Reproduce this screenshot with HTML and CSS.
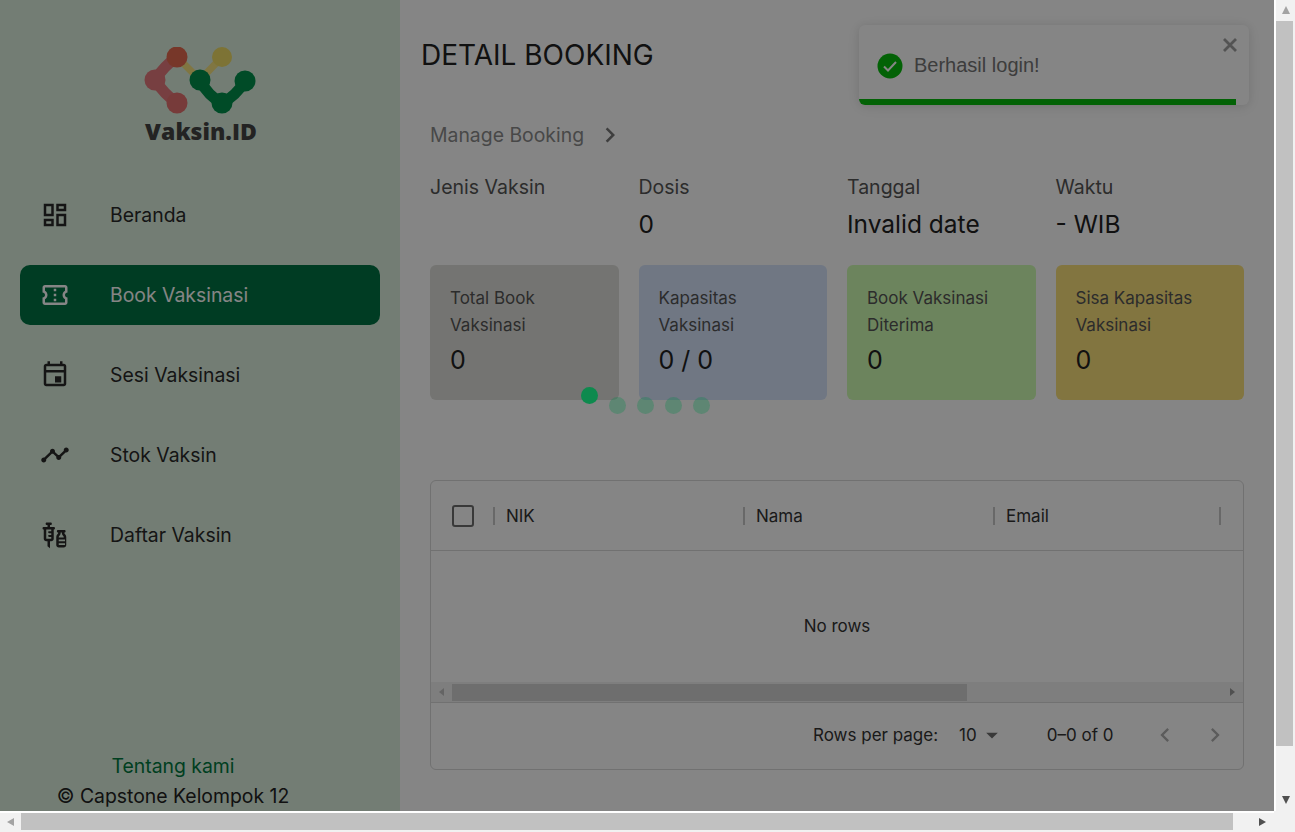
FILE: index.html
```html
<!DOCTYPE html>
<html lang="en">
<head>
  <meta charset="UTF-8">
  <title>Detail Booking</title>
  <link rel="stylesheet" href="styles.css">
</head>
<body>
  <div class="window">
    <div class="viewport">
      <div class="app">
        <aside class="sidebar">
          <div class="logo">
            <svg class="logo-mark" width="112" height="70" viewBox="145 47 112 70">
              <path class="link-yellow" d="M178 57 L201 80 L223 57"/>
              <circle class="c-yellow" cx="223" cy="57" r="10"/>
              <path class="link-red" d="M178 57 Q165 66 156 80 Q165 94 178 103"/>
              <circle class="c-red-left" cx="156" cy="80" r="10.5"/>
              <circle class="c-red-top" cx="178" cy="57" r="10.5"/>
              <circle class="c-red-bottom" cx="178" cy="103" r="10.5"/>
              <path class="link-green" d="M201 80 Q209 96 223 103 Q237 96 246 81"/>
              <circle class="c-green" cx="201" cy="80" r="10.5"/>
              <circle class="c-green" cx="223" cy="103" r="10.5"/>
              <circle class="c-green" cx="246" cy="81" r="10.5"/>
            </svg>
            <span class="logo-text">Vaksin.ID</span>
          </div>

          <nav class="nav">
            <a class="nav-item">
              <svg class="icon" viewBox="0 0 24 24"><path d="M19 5v2h-4V5h4M9 5v6H5V5h4m10 8v6h-4v-6h4M9 17v2H5v-2h4M21 3h-8v6h8V3zM11 3H3v10h8V3zm10 8h-8v10h8V11zm-10 4H3v6h8v-6z"/></svg>
              <span>Beranda</span>
            </a>
            <a class="nav-item active">
              <svg class="icon" viewBox="0 0 24 24"><path d="M22 10V6c0-1.11-.9-2-2-2H4c-1.1 0-1.99.89-1.99 2v4c1.1 0 1.99.9 1.99 2s-.89 2-2 2v4c0 1.1.9 2 2 2h16c1.1 0 2-.9 2-2v-4c-1.1 0-2-.9-2-2s.9-2 2-2zm-2-1.46c-1.19.69-2 1.99-2 3.46s.81 2.77 2 3.46V18H4v-2.54c1.19-.69 2-1.99 2-3.46 0-1.48-.8-2.77-1.99-3.46L4 6h16v2.54zM11 15h2v2h-2zm0-4h2v2h-2zm0-4h2v2h-2z"/></svg>
              <span>Book Vaksinasi</span>
            </a>
            <a class="nav-item">
              <svg class="icon" viewBox="0 0 24 24"><path d="M19 3h-1V1h-2v2H8V1H6v2H5c-1.1 0-2 .9-2 2v14c0 1.1.9 2 2 2h14c1.1 0 2-.9 2-2V5c0-1.1-.9-2-2-2zm0 16H5V10h14v9zM5 8V5h14v3H5zm12 5h-5v5h5v-5z"/></svg>
              <span>Sesi Vaksinasi</span>
            </a>
            <a class="nav-item">
              <svg class="icon" viewBox="0 0 24 24"><path d="M23 8c0 1.1-.9 2-2 2-.18 0-.35-.02-.51-.07l-3.56 3.55c.05.16.07.34.07.52 0 1.1-.9 2-2 2s-2-.9-2-2c0-.18.02-.36.07-.52l-2.55-2.55c-.16.05-.34.07-.52.07s-.36-.02-.52-.07l-4.55 4.56c.05.16.07.33.07.51 0 1.1-.9 2-2 2s-2-.9-2-2 .9-2 2-2c.18 0 .35.02.51.07l4.56-4.55C8.02 9.36 8 9.18 8 9c0-1.1.9-2 2-2s2 .9 2 2c0 .18-.02.36-.07.52l2.55 2.55c.16-.05.34-.07.52-.07s.36.02.52.07l3.55-3.56C19.02 8.35 19 8.18 19 8c0-1.1.9-2 2-2s2 .9 2 2z"/></svg>
              <span>Stok Vaksin</span>
            </a>
            <a class="nav-item">
              <svg class="icon" viewBox="0 0 24 24"><path d="M11 5.5H8V4h.5c.55 0 1-.45 1-1s-.45-1-1-1h-3c-.55 0-1 .45-1 1s.45 1 1 1H6v1.5H3c-.55 0-1 .45-1 1s.45 1 1 1V15c0 1.1.9 2 2 2h1v4l2 1.5V17h1c1.1 0 2-.9 2-2V7.5c.55 0 1-.45 1-1s-.45-1-1-1zM9 9H7.25c-.41 0-.75.34-.75.75s.34.75.75.75H9v1.5H7.25c-.41 0-.75.34-.75.75s.34.75.75.75H9V15H5V7.5h4V9zm10.5 1.5V10c.55 0 1-.45 1-1s-.45-1-1-1h-5c-.55 0-1 .45-1 1s.45 1 1 1v.5c0 .5-1.5 1.16-1.5 3V20c0 1.1.9 2 2 2h4c1.1 0 2-.9 2-2v-6.5c0-1.84-1.5-2.5-1.5-3zm-3 0V10h1v.5c0 1.6 1.5 2 1.5 3V14h-4v-.5c0-1 1.5-1.4 1.5-3zM15 20v-1.5h5V20h-5zm5-3h-5v-1.5h5V17z"/></svg>
              <span>Daftar Vaksin</span>
            </a>
          </nav>

          <footer class="side-footer">
            <a class="about">Tentang kami</a>
            <p class="copy">© Capstone Kelompok 12</p>
          </footer>
        </aside>

        <main class="main">
          <h1 class="title">DETAIL BOOKING</h1>
          <div class="content">
            <div class="crumb">
              <span>Manage Booking</span>
              <svg class="crumb-icon" viewBox="0 0 24 24"><path d="M10 6 8.59 7.41 13.17 12l-4.58 4.59L10 18l6-6z"/></svg>
            </div>

            <div class="grid info">
              <div><div class="info-label">Jenis Vaksin</div><div class="info-value"></div></div>
              <div><div class="info-label">Dosis</div><div class="info-value">0</div></div>
              <div><div class="info-label">Tanggal</div><div class="info-value">Invalid date</div></div>
              <div><div class="info-label">Waktu</div><div class="info-value">- WIB</div></div>
            </div>

            <div class="grid cards">
              <div class="card grey"><div class="card-label">Total Book Vaksinasi</div><div class="card-value">0</div></div>
              <div class="card blue"><div class="card-label">Kapasitas Vaksinasi</div><div class="card-value">0 / 0</div></div>
              <div class="card green"><div class="card-label">Book Vaksinasi Diterima</div><div class="card-value">0</div></div>
              <div class="card yellow"><div class="card-label">Sisa Kapasitas Vaksinasi</div><div class="card-value">0</div></div>
            </div>

            <div class="table">
              <div class="table-head">
                <div class="col-check"><span class="checkbox"></span></div>
                <div class="col">NIK</div>
                <div class="col">Nama</div>
                <div class="col">Email</div>
                <div class="col col-end"></div>
              </div>
              <div class="table-empty">No rows</div>
              <div class="table-scroll">
                <span class="tri tri-left tri-small"></span>
                <div class="table-track"><div class="table-thumb"></div></div>
                <span class="tri tri-right tri-small"></span>
              </div>
              <div class="table-foot">
                <span class="rows-label">Rows per page:</span>
                <span class="rows-value">10</span>
                <svg class="caret" viewBox="0 0 24 24"><path d="m7 10 5 5 5-5z"/></svg>
                <span class="rows-range">0–0 of 0</span>
                <svg class="page-btn" viewBox="0 0 24 24"><path d="M15.41 7.41 14 6l-6 6 6 6 1.41-1.41L10.83 12z"/></svg>
                <svg class="page-btn" viewBox="0 0 24 24"><path d="M10 6 8.59 7.41 13.17 12l-4.58 4.59L10 18l6-6z"/></svg>
              </div>
            </div>
          </div>
        </main>
      </div>

      <div class="toast">
        <svg class="toast-icon" viewBox="0 0 26 26"><circle cx="13" cy="13" r="12.5"/><path d="M7 13.5 11 17.5 19 9"/></svg>
        <span class="toast-text">Berhasil login!</span>
        <svg class="toast-close" viewBox="0 0 14 14"><path d="M1 1 13 13 M13 1 1 13"/></svg>
        <div class="toast-bar"></div>
      </div>

      <div class="overlay"></div>

      <div class="loader">
        <span class="dot on"></span>
        <span class="dot"></span>
        <span class="dot"></span>
        <span class="dot"></span>
        <span class="dot"></span>
      </div>
    </div>

    <div class="vbar">
      <span class="tri tri-up"></span>
      <div class="vthumb"></div>
      <span class="tri tri-down"></span>
    </div>
    <div class="hbar">
      <span class="tri tri-left"></span>
      <div class="hthumb"></div>
      <span class="tri tri-right"></span>
    </div>
    <div class="corner"></div>
  </div>
</body>
</html>
```

FILE: styles.css
```css
html, body {
  margin: 0;
  height: 100%;
  overflow: hidden;
  font-family: Inter, "Open Sans", sans-serif;
  color: #222;
}

.window {
  display: grid;
  grid-template-columns: 1274px 21px;
  grid-template-rows: 811px 21px;
  height: 832px;
}

.viewport {
  position: relative;
  overflow: hidden;
}

.app {
  display: flex;
  width: 1295px;
  height: 860px;
  background: #fff;
}

/* sidebar */
.sidebar {
  display: flex;
  flex-direction: column;
  flex: none;
  width: 400px;
  height: 811px;
  box-sizing: border-box;
  padding: 47px 20px 0;
  background: #dcf0de;
}

.logo {
  display: flex;
  flex-direction: column;
  align-items: center;
  height: 138px;
}

.logo-mark {
  display: block;
  fill: none;
  stroke-linecap: round;
}

.logo-text {
  margin-left: 2px;
  font-family: "Open Sans", sans-serif;
  font-size: 23px;
  font-weight: 800;
  line-height: 28px;
  color: #444;
}

.link-yellow { stroke: #f6e27f; stroke-width: 7; }
.link-red { stroke: #e5797d; stroke-width: 11; }
.link-green { stroke: #00904c; stroke-width: 11; }
.c-yellow { fill: #efdc66; }
.c-red-top { fill: #e56a4f; }
.c-red-left { fill: #e57a7e; }
.c-red-bottom { fill: #e4716f; }
.c-green { fill: #00904c; }

.nav {
  display: flex;
  flex-direction: column;
  gap: 20px;
}

.nav-item {
  display: flex;
  align-items: center;
  height: 60px;
  padding-left: 20px;
  border-radius: 10px;
  font-size: 19.4px;
  color: #2a2a2a;
}

.nav-item .icon {
  flex: none;
  width: 30px;
  height: 30px;
  margin-right: 40px;
  fill: currentColor;
}

.nav-item.active {
  background: #007343;
  color: #fff;
}

.side-footer {
  margin-top: auto;
  margin-right: 54px;
  text-align: center;
  font-size: 19.4px;
  line-height: 30px;
}

.about { color: #00793f; }

.copy { margin: 0; }

/* main */
.main {
  flex: 1;
  padding: 34px 51px 0 21px;
}

.title {
  margin: 0;
  font-size: 28px;
  font-weight: 400;
  line-height: 42px;
  color: #222;
}

.content { padding-left: 9px; }

.crumb {
  display: flex;
  align-items: center;
  height: 30px;
  margin-top: 44px;
  font-size: 19.4px;
  color: #8b8b8b;
}

.crumb-icon {
  width: 30px;
  height: 30px;
  margin-left: 11px;
  fill: #777;
}

.grid {
  display: grid;
  grid-template-columns: repeat(4, 1fr);
  gap: 20px;
}

.info { margin-top: 22px; }

.info-label {
  font-size: 19.5px;
  line-height: 30px;
  color: #555;
}

.info-value {
  height: 36px;
  margin-top: 4px;
  font-size: 24.5px;
  line-height: 36px;
}

.cards { margin-top: 23px; }

.card {
  box-sizing: border-box;
  height: 135px;
  padding: 20px;
  border-radius: 6px;
}

.card-label {
  font-size: 17px;
  line-height: 27px;
  color: #555;
}

.card-value {
  margin-top: 3px;
  font-size: 25px;
  line-height: 36px;
}

.grey { background: #dfdfda; }
.blue { background: #d6e4fc; }
.green { background: #d0fdb2; }
.yellow { background: #f9e07c; }

/* table */
.table {
  box-sizing: border-box;
  height: 290px;
  margin-top: 80px;
  border: 1px solid #d8d8d8;
  border-radius: 6px;
}

.table-head {
  display: flex;
  align-items: center;
  height: 69px;
  border-bottom: 1px solid #d8d8d8;
  font-size: 17px;
  color: #333;
}

.col-check {
  display: flex;
  justify-content: center;
  width: 62px;
}

.checkbox {
  box-sizing: border-box;
  width: 22px;
  height: 22px;
  margin-left: 1px;
  border: 2.5px solid #6e6e6e;
  border-radius: 3px;
}

.col {
  display: flex;
  align-items: center;
  box-sizing: border-box;
  width: 250px;
  height: 18px;
  padding-left: 11px;
  border-left: 2px solid #c8c8c8;
}

.col-end {
  width: 4px;
  margin-left: -24px;
}

.table-empty {
  display: flex;
  align-items: center;
  justify-content: center;
  box-sizing: border-box;
  height: 131px;
  padding-top: 18px;
  font-size: 17px;
  color: #333;
}

.table-scroll {
  display: flex;
  align-items: center;
  justify-content: space-between;
  height: 20px;
  padding: 0 8px;
  background: #f1f1f1;
  border-bottom: 1px solid #d8d8d8;
}

.table-track {
  flex: 1;
  height: 17px;
  margin: 0 8px;
}

.table-thumb {
  width: 515px;
  height: 17px;
  background: #d4d4d4;
}

.table-foot {
  display: flex;
  align-items: center;
  box-sizing: border-box;
  height: 66px;
  padding: 0 0 2px 382px;
  font-size: 17px;
  white-space: nowrap;
  color: #333;
}

.rows-value { margin-left: 21px; }

.caret {
  flex: none;
  width: 28px;
  height: 28px;
  margin-left: 1px;
  fill: #6e6e6e;
}

.rows-range { margin-left: 41px; margin-right: 38px; }

.page-btn {
  flex: none;
  width: 28px;
  height: 28px;
  fill: #b0b0b0;
}

.page-btn + .page-btn { margin-left: 22px; }

/* toast lies over the page, under the backdrop */
.toast {
  position: absolute;
  top: 25px;
  left: 859px;
  display: flex;
  align-items: center;
  box-sizing: border-box;
  width: 390px;
  height: 80px;
  padding: 0 0 0 18px;
  overflow: hidden;
  background: #fff;
  border-radius: 6px;
  box-shadow: 0 1px 10px rgba(0, 0, 0, 0.1), 0 2px 15px rgba(0, 0, 0, 0.05);
  font-family: "Liberation Sans", Arial, sans-serif;
}

.toast-icon {
  width: 26px;
  height: 26px;
  margin-right: 11px;
  margin-top: 1px;
}

.toast-icon circle { fill: #07bc0c; }

.toast-icon path {
  fill: none;
  stroke: #fff;
  stroke-width: 2;
}

.toast-text {
  margin-top: 1px;
  font-size: 20px;
  color: #757575;
}

.toast-close {
  position: absolute;
  top: 13px;
  right: 12px;
  width: 14px;
  height: 14px;
  fill: none;
  stroke: #a0a0a0;
  stroke-width: 2.8;
}

.toast-bar {
  position: absolute;
  left: 0;
  bottom: 0;
  width: 377px;
  height: 6px;
  background: #07bc0c;
}

.overlay {
  position: absolute;
  inset: 0;
  background: rgba(0, 0, 0, 0.48);
}

.loader {
  position: absolute;
  top: 387px;
  left: 581px;
  display: flex;
  gap: 11px;
}

.dot {
  width: 17px;
  height: 17px;
  margin-top: 10px;
  border-radius: 50%;
  background: #0e8a4e;
  opacity: 0.33;
}

.dot.on {
  margin-top: 0;
  opacity: 1;
}

/* browser scrollbars */
.vbar, .hbar, .corner { background: #f1f1f1; }

.vbar {
  display: flex;
  flex-direction: column;
  align-items: center;
  box-sizing: border-box;
  border-left: 2px solid #fff;
}

.vthumb {
  flex: none;
  box-sizing: border-box;
  width: 17px;
  height: 725px;
  margin-right: 2px;
  background: #c1c1c1;
}

.vbar .tri-up { margin: 6px 0 7px; }
.vbar .tri-down { margin-top: 50px; }

.hbar {
  display: flex;
  align-items: center;
  box-sizing: border-box;
  border-top: 2px solid #fff;
  padding-bottom: 2px;
}

.hthumb {
  flex: none;
  width: 1212px;
  height: 17px;
  background: #c1c1c1;
}

.hbar .tri-left { margin: 0 7px; }
.hbar .tri-right { margin-left: 26px; }

.tri {
  flex: none;
  width: 0;
  height: 0;
  border-style: solid;
  border-color: transparent;
}

.tri-up { border-width: 0 4px 8px; border-bottom-color: #a3a3a3; }
.tri-down { border-width: 8px 4px 0; border-top-color: #505050; }
.tri-left { border-width: 4px 7px 4px 0; border-right-color: #a3a3a3; }
.tri-right { border-width: 4px 0 4px 7px; border-left-color: #505050; }

.tri-small.tri-left { border-width: 4px 5px 4px 0; border-right-color: #c0c0c0; }
.tri-small.tri-right { border-width: 4px 0 4px 5px; border-left-color: #999; }
```
